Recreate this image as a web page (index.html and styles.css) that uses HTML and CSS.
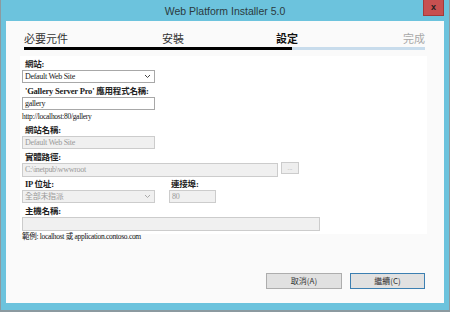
FILE: index.html
```html
<!DOCTYPE html>
<html lang="zh-Hant">
<head>
    <meta charset="UTF-8">
    <meta name="viewport" content="width=device-width, initial-scale=1.0">
    <title>Web Platform Installer 5.0</title>
    <link rel="stylesheet" href="styles.css">
</head>
<body>
<div class="window">
    <!-- Barra de título -->
    <div class="titlebar">
        <span class="title-spacer"></span>
        <span class="title">Web Platform Installer 5.0</span>
        <span class="close-btn">x</span>
    </div>

    <div class="content">
        <!-- Pasos del asistente -->
        <div class="steps">
            <span class="step done">必要元件</span>
            <span class="step done">安裝</span>
            <span class="step current">設定</span>
            <span class="step todo">完成</span>
        </div>
        <div class="progress">
            <div class="progress-fill" style="width: 268px"></div>
        </div>

        <!-- Formulario de configuración -->
        <div class="panel">
            <label class="field-label">網站:</label>
            <div class="select short">
                <span>Default Web Site</span>
                <svg width="7" height="5" viewBox="0 0 7 5"><path d="M1 1 L3.5 3.5 L6 1" fill="none" stroke="#444" stroke-width="1"/></svg>
            </div>

            <label class="field-label">'Gallery Server Pro' 應用程式名稱:</label>
            <div class="input short">gallery</div>
            <div class="hint">http://localhost:80/gallery</div>

            <label class="field-label">網站名稱:</label>
            <div class="input short disabled">Default Web Site</div>

            <label class="field-label">實體路徑:</label>
            <div class="path-row">
                <div class="input path disabled">C:\inetpub\wwwroot</div>
                <button class="browse-btn">...</button>
            </div>

            <div class="ip-row">
                <div class="ip-col">
                    <label class="field-label">IP 位址:</label>
                    <div class="select short disabled">
                        <span>全部未指派</span>
                        <svg width="7" height="5" viewBox="0 0 7 5"><path d="M1 1 L3.5 3.5 L6 1" fill="none" stroke="#aaa" stroke-width="1"/></svg>
                    </div>
                </div>
                <div class="port-col">
                    <label class="field-label">連接埠:</label>
                    <div class="input port disabled">80</div>
                </div>
            </div>

            <label class="field-label">主機名稱:</label>
            <div class="input host disabled"></div>
            <div class="hint example">範例: localhost 或 application.contoso.com</div>
        </div>

        <!-- Botones -->
        <div class="actions">
            <button class="action-btn">取消(A)</button>
            <button class="action-btn primary">繼續(C)</button>
        </div>
    </div>
</div>
</body>
</html>
```

FILE: styles.css
```css
body {
    margin: 0;
    font-family: "Liberation Sans", "Noto Sans CJK TC", sans-serif;
    background: #ffffff;
}

.window {
    width: 450px;
    height: 312px;
    box-sizing: border-box;
    background: #6cc3dd;
    border-left: 1px solid #8c9aa0;
    border-right: 1px solid #8c9aa0;
    border-bottom: 2px solid #8c9aa0;
    padding: 0 5px 7px 5px;
    display: flex;
    flex-direction: column;
}

/* Barra de título */
.titlebar {
    height: 21px;
    display: grid;
    grid-template-columns: 1fr auto 1fr;
}

.title {
    font-size: 10.5px;
    color: #2b3a40;
    align-self: center;
    margin-top: 1px;
}

.close-btn {
    justify-self: end;
    align-self: start;
    display: block;
    width: 21px;
    height: 16px;
    box-sizing: border-box;
    background: #c75050;
    border: 1px solid #a33a3a;
    border-top: none;
    color: #1e1e1e;
    font: bold 9px/14px "Liberation Sans", sans-serif;
    text-align: center;
}

.content {
    flex: 1;
    background: #fafafa;
    display: flex;
    flex-direction: column;
}

/* Pasos */
.steps {
    display: grid;
    grid-template-columns: 138px 114px 1fr auto;
    margin: 11px 19px 0 18px;
    font-family: "Noto Sans CJK TC", sans-serif;
    font-size: 11px;
    line-height: 13px;
}

.step.done { color: #333333; }
.step.current { color: #111111; font-weight: bold; }
.step.todo { color: #a8a8a8; }

.progress {
    height: 3px;
    margin: 2px 19px 0 18px;
    background: #c8dcec;
}

.progress-fill {
    height: 3px;
    background: #000000;
}

/* Panel de formulario */
.panel {
    background: #ffffff;
    margin: 6px 17px 0 14px;
    padding: 4px 2px 4px 2px;
    height: 178px;
    box-sizing: border-box;
    font-family: "Liberation Serif", "Noto Sans CJK TC", serif;
    font-size: 8px;
    color: #222222;
}

.field-label {
    display: block;
    font-weight: bold;
    font-size: 8.5px;
    line-height: 9px;
    padding-left: 3px;
    letter-spacing: -0.2px;
}

.input,
.select {
    height: 13px;
    box-sizing: border-box;
    border: 1px solid #a8a8a8;
    background: #ffffff;
    line-height: 11px;
    padding: 0 2px;
    font-size: 8px;
    letter-spacing: -0.3px;
    color: #222222;
}

.select {
    display: flex;
    align-items: center;
    justify-content: space-between;
    padding-right: 3px;
}

.short { width: 133px; }
.path { width: 256px; height: 14px; }
.port { width: 47px; }
.host { width: 298px; height: 14px; }

.disabled {
    background: #f0f0f0;
    border-color: #cccccc;
    color: #9a9a9a;
}

.hint {
    font-size: 7.5px;
    line-height: 10px;
    margin: 2px 0 3px 0;
    letter-spacing: -0.3px;
    color: #111111;
}

.example {
    margin-top: 1px;
}

.path-row {
    display: flex;
    align-items: flex-start;
    gap: 3px;
}

.browse-btn {
    width: 18px;
    height: 12px;
    margin-top: -1px;
    background: #eeeeee;
    border: 1px solid #cccccc;
    font-size: 6px;
    line-height: 8px;
    color: #999999;
    padding: 0;
}

.ip-row {
    display: flex;
    gap: 14px;
    margin-top: 3px;
}

.port-col .field-label { padding-left: 2px; }

.panel > .field-label { margin-top: 4px; }
.panel > .field-label:first-child { margin-top: 0; }
.field-label + .input,
.field-label + .select,
.field-label + .path-row { margin-top: 1px; }
.ip-row .field-label { margin-top: 0; }

/* Botones de acción */
.actions {
    margin-top: auto;
    margin-bottom: 14px;
    display: flex;
    justify-content: flex-end;
    gap: 8px;
    padding-right: 19px;
}

.action-btn {
    width: 76px;
    height: 16px;
    background: #e1e1e1;
    border: 1px solid #adadad;
    font-family: "Noto Sans CJK TC", sans-serif;
    font-size: 8px;
    line-height: 12px;
    color: #333333;
    padding: 0;
}

.action-btn.primary {
    width: 75px;
    border-color: #3c7fb1;
}
```
